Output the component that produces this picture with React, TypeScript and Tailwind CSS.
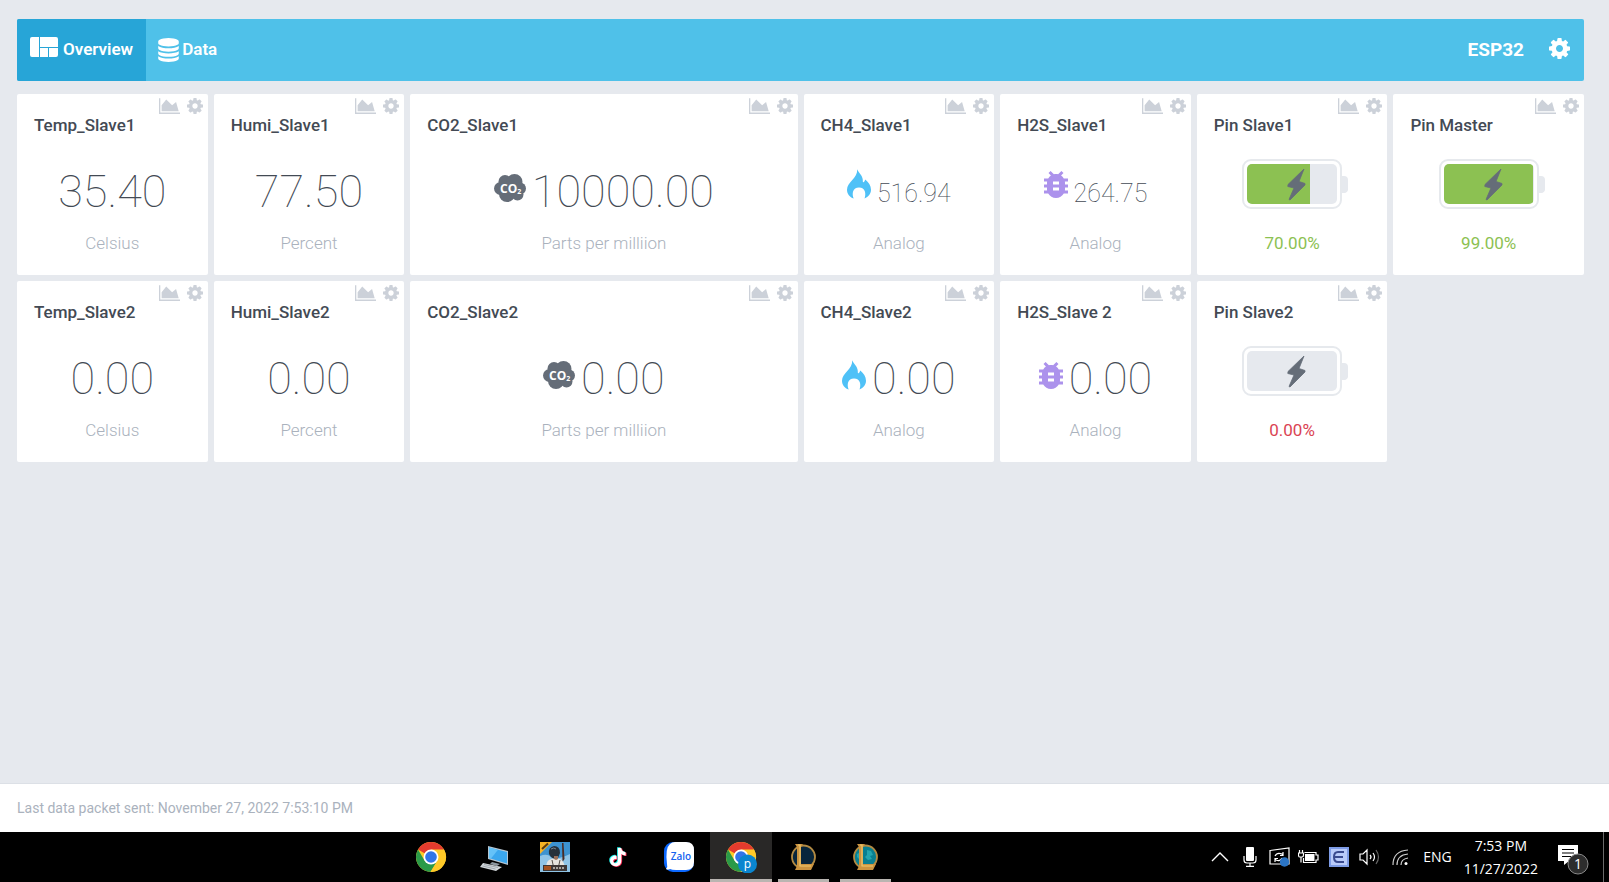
import type { ReactNode } from "react";
import { MdBugReport } from "react-icons/md";

function CogIcon({ className }: { className: string }) {
  return (
    <svg viewBox="128 128 1536 1536" className={className} fill="currentColor" aria-hidden="true">
      <path d="M1152 896q0-106-75-181t-181-75-181 75-75 181 75 181 181 75 181-75 75-181zm512-109v222q0 12-8 23t-20 13l-185 28q-19 54-39 91 35 50 107 138 10 12 10 25t-9 23q-27 37-99 108t-94 71q-12 0-26-9l-138-108q-44 23-91 38-16 136-29 186-7 28-36 28h-222q-14 0-24.500-8.500t-11.500-21.500l-28-184q-49-16-90-37l-141 107q-10 9-25 9-14 0-25-11-126-114-165-168-7-10-7-23 0-12 8-23 15-21 51-66.500t54-70.500q-27-50-41-99l-183-27q-13-2-21-12.500t-8-23.500v-222q0-12 8-23t19-13l186-28q14-46 39-92-40-57-107-138-10-12-10-24 0-10 9-23 26-36 98.500-107.500t94.500-71.500q13 0 26 10l138 107q44-23 91-38 16-136 29-186 7-28 36-28h222q14 0 24.500 8.500t11.500 21.500l28 184q49 16 90 37l142-107q9-9 24-9 13 0 25 10 129 119 165 170 7 8 7 22 0 12-8 23-15 21-51 66.500t-54 70.500q26 50 41 98l183 28q13 2 21 12.500t8 23.500z" />
    </svg>
  );
}

function AreaChartIcon() {
  return (
    <svg viewBox="0 128 2048 1536" className="h-4 w-[21px]" fill="currentColor" aria-hidden="true">
      <path d="M2048 1536v128h-2048v-1536h128v1408h1920zm-384-1024l256 896h-1664v-576l448-576 576 576z" />
    </svg>
  );
}

function DatabaseIcon() {
  return (
    <svg viewBox="128 0 1536 1792" className="h-6 w-[21px]" fill="currentColor" aria-hidden="true">
      <path d="M896 768q237 0 443-43t325-127v170q0 69-103 128t-280 93.5-385 34.5-385-34.5-280-93.5-103-128v-170q119 84 325 127t443 43zm0 768q237 0 443-43t325-127v170q0 69-103 128t-280 93.5-385 34.5-385-34.5-280-93.5-103-128v-170q119 84 325 127t443 43zm0-384q237 0 443-43t325-127v170q0 69-103 128t-280 93.5-385 34.5-385-34.5-280-93.5-103-128v-170q119 84 325 127t443 43zm0-1152q208 0 385 34.5t280 93.5 103 128v128q0 69-103 128t-280 93.5-385 34.5-385-34.5-280-93.5-103-128v-128q0-69 103-128t280-93.5 385-34.5z" />
    </svg>
  );
}

function OverviewIcon() {
  return (
    <svg viewBox="0 0 28 20" className="h-5 w-7" fill="currentColor" aria-hidden="true">
      <path d="M2 0h7v20H2a2 2 0 0 1-2-2V2a2 2 0 0 1 2-2zM10 0h16a2 2 0 0 1 2 2v8H10zM10 11h8v9h-8zM19 11h9v7a2 2 0 0 1-2 2h-7z" />
    </svg>
  );
}

function Co2Icon() {
  return (
    <svg viewBox="0 0 32 28" className="mb-2 h-7 w-8" aria-hidden="true">
      <g fill="#656d78">
        <circle cx="11" cy="7.500" r="6.500" />
        <circle cx="20.500" cy="8" r="8" />
        <circle cx="6.500" cy="14.500" r="6.500" />
        <circle cx="26" cy="14.500" r="6" />
        <circle cx="13" cy="20" r="8" />
        <circle cx="23.500" cy="20.500" r="6" />
      </g>
      <text x="6" y="19" fill="#fff" fontSize="12" fontWeight="700" fontFamily="Open Sans, sans-serif">
        CO<tspan fontSize="7" dy="1">2</tspan>
      </text>
    </svg>
  );
}

function FlameIcon() {
  return (
    <svg viewBox="0 0 24 30" className="mb-2 h-[30px] w-6" fill="#4fc1f7" aria-hidden="true">
      <path d="M10.200.2c1.200 3.200 5.600 6.300 5.600 10.800 0 1.200-.1 2 .6 2.300.9.100 1.200-1.300 1.900-2.700 3.200 2.600 5.700 6.300 5.700 10.200 0 4-2.500 7-6.500 8.700 1.800-4.400.9-11-5.500-11s-7.300 6.600-5.300 11C2.700 28 0 25 0 20.700 0 12.500 10.700 9.800 10.200.2z" />
    </svg>
  );
}

function BugIcon() {
  return <MdBugReport viewBox="4 3 16 18" className="mb-2 h-[27px] w-6 text-[#ac92ec]" aria-hidden="true" />;
}

function Battery({ level }: { level: number }) {
  return (
    <svg viewBox="0 0 112 50" className="h-[50px] w-28" aria-hidden="true">
      <clipPath id={`level-${level}`}>
        <rect x="11" y="5" width={(90 * level) / 100} height="40" />
      </clipPath>
      <rect x="7" y="1" width="98" height="48" rx="8" fill="#fff" stroke="#e6e9ed" strokeWidth="2" />
      <path d="M106 17h2a4 4 0 0 1 4 4v8a4 4 0 0 1-4 5h-2z" fill="#e6e9ee" />
      <rect x="11" y="5" width="90" height="40" rx="5" fill="#e6e9ee" />
      <rect x="11" y="5" width="90" height="40" rx="5" fill="#8cc152" clipPath={`url(#level-${level})`} />
      <path d="M68 10 52 25.500 51.800 27.500 58 29 53 40.500 54 41 69 26 69 24.500 63 22.500z" fill="#656d78" stroke="#656d78" strokeLinejoin="round" strokeWidth=".8" />
    </svg>
  );
}

type Widget = {
  title: string;
  value?: string;
  unit: string;
  icon?: ReactNode;
  small?: boolean;
  wide?: boolean;
  level?: number;
  alert?: boolean;
};

const widgets: Widget[] = [
  { title: "Temp_Slave1", value: "35.40", unit: "Celsius" },
  { title: "Humi_Slave1", value: "77.50", unit: "Percent" },
  { title: "CO2_Slave1", value: "10000.00", unit: "Parts per milliion", icon: <Co2Icon />, wide: true },
  { title: "CH4_Slave1", value: "516.94", unit: "Analog", icon: <FlameIcon />, small: true },
  { title: "H2S_Slave1", value: "264.75", unit: "Analog", icon: <BugIcon />, small: true },
  { title: "Pin Slave1", unit: "70.00%", level: 70 },
  { title: "Pin Master", unit: "99.00%", level: 99 },
  { title: "Temp_Slave2", value: "0.00", unit: "Celsius" },
  { title: "Humi_Slave2", value: "0.00", unit: "Percent" },
  { title: "CO2_Slave2", value: "0.00", unit: "Parts per milliion", icon: <Co2Icon />, wide: true },
  { title: "CH4_Slave2", value: "0.00", unit: "Analog", icon: <FlameIcon /> },
  { title: "H2S_Slave 2", value: "0.00", unit: "Analog", icon: <BugIcon /> },
  { title: "Pin Slave2", unit: "0.00%", level: 0, alert: true },
];

function Card({ widget }: { widget: Widget }) {
  const { title, value, unit, icon, small, wide, level, alert } = widget;
  const unitColor = level === undefined ? "text-[#aab2bd]" : alert ? "text-[#da4453]" : "text-[#8cc152]";
  return (
    <section className={`flex flex-col rounded-xs bg-white pb-5 ${wide ? "col-span-2" : ""}`}>
      <div className="flex h-5 items-end justify-end gap-[7px] pr-[5px] text-[#ccd1d9]">
        <button type="button" aria-label={`${title} chart`}>
          <AreaChartIcon />
        </button>
        <button type="button" aria-label={`${title} settings`}>
          <CogIcon className="size-4" />
        </button>
      </div>
      <h2 className="px-[17px] text-[17px] leading-[22px] font-medium text-[#434a54]">{title}</h2>
      <div className="flex h-[76px] items-center justify-center pt-7">
        {level !== undefined ? (
          <div className="pb-2">
            <Battery level={level} />
          </div>
        ) : (
          <div className="flex items-center gap-1.5 pt-2">
            {icon && <span className={small ? "pb-2" : ""}>{icon}</span>}
            <span className={`font-thin text-[#434a54] ${small ? "pt-1 text-[25px] leading-8" : "text-[45px] leading-10"}`}>
              {value}
            </span>
          </div>
        )}
      </div>
      <p className={`pt-[19px] text-center text-[17px] leading-6 ${level === undefined ? "font-light" : "font-normal"} ${unitColor}`}>{unit}</p>
    </section>
  );
}

function ChromeIcon({ badge }: { badge?: boolean }) {
  return (
    <svg viewBox="0 0 32 32" className="size-8" aria-hidden="true">
      <circle cx="16" cy="16" r="15" fill="#ffc928" />
      <path d="M16 16 3 8.500A15 15 0 0 1 29 8.500z" fill="#e33b2e" />
      <path d="M3 8.500A15 15 0 0 0 15.500 31L22.500 19.500 9.500 19.500z" fill="#2a9a48" />
      <path d="M16 8.500h13A15 15 0 0 1 15.500 31L22.500 19.500z" fill="#ffc928" />
      <circle cx="16" cy="16" r="7.500" fill="#fff" />
      <circle cx="16" cy="16" r="5.800" fill="#3175e8" />
      {badge && (
        <>
          <circle cx="22.500" cy="23" r="9.500" fill="#0a85cf" />
          <text x="22.500" y="26.500" textAnchor="middle" fill="#fff" fontSize="12" fontFamily="Open Sans, sans-serif">
            p
          </text>
        </>
      )}
    </svg>
  );
}

function ComputerIcon() {
  return (
    <svg viewBox="0 0 30 30" className="size-[30px]" aria-hidden="true">
      <path d="M10 4l20 5v14l-20-6z" fill="#b6c6d2" />
      <path d="M11 5.500l18 4.500v11.500L11 16z" fill="#3ba7ee" />
      <path d="M11 5.500l9 2.200L13 16.500l-2-.6z" fill="#65c2f8" />
      <path d="M14 20l8 2-3 2-7-2z" fill="#8c979f" />
      <path d="M5 21l19 4-6 4-16-4z" fill="#d2d7da" />
      <path d="M6 22.500l14 3M4.500 24l13 3" stroke="#8c979f" strokeWidth=".7" />
    </svg>
  );
}

function PubgIcon() {
  return (
    <svg viewBox="0 0 30 30" className="size-[30px]" aria-hidden="true">
      <path d="M0 0h30v30H0z" fill="#3d93d0" />
      <path d="M0 14q7-3 11 1t19-3v18H0z" fill="#8fc4e6" />
      <path d="M0 0h12L0 12z" fill="#f5b324" />
      <path d="M2 7 8 1.500" stroke="#5a3a10" strokeWidth="2" />
      <path d="M22 1h1.500l1 16-2 3z" fill="#4a2c24" />
      <path d="M6 27q0-7 3-9l5-2 6 1q5 3 5 10z" fill="#e6e4df" />
      <path d="M12 18l2 9M20 18l-2 9" stroke="#55504b" />
      <path d="M9 12q-1-7 5-8 6 0 6 7l-2 5q-4 2-7-1z" fill="#27313a" />
      <path d="M11 7q3-2 5 0" stroke="#7a8790" fill="none" />
      <path d="M14 14h4v3l-2 1-2-1z" fill="#99705a" />
      <path d="M3 23h24v6H3z" fill="#3d3736" />
      <path d="M4 24h7v4H4z" fill="#a5521f" />
      <path d="M13 26h12" stroke="#a9a5a0" strokeWidth="2" strokeDasharray="2 1" />
    </svg>
  );
}

function TiktokIcon() {
  const note = "M10 1h3.500c.3 2.600 1.800 4.200 4.500 4.400v3.400c-1.700.1-3.200-.5-4.500-1.400v6.900c0 6.800-8.800 7.500-11 3-2.300-4.800 1.400-9 6-8.300v3.600c-3.200-.5-4.300 2-3.100 3.500 1.400 1.700 4.600 1 4.600-2.200z";
  return (
    <svg viewBox="-1 0 20 22" className="h-[21px] w-5" aria-hidden="true">
      <path d={note} fill="#25f4ee" transform="translate(-.9 -.7)" />
      <path d={note} fill="#fe2c55" transform="translate(.9 .7)" />
      <path d={note} fill="#fff" />
    </svg>
  );
}

function ZaloIcon() {
  return (
    <svg viewBox="0 0 30 30" className="size-[30px]" aria-hidden="true">
      <rect width="30" height="30" rx="9" fill="#0b68ff" />
      <path d="M11 0h11q8 0 8 8v12q0 8-8 8H12q-4 0-6-1-2 1-4 0 2-2 1-5Q1 6 6 2 8 0 11 0z" fill="#fff" />
      <text x="17" y="18" textAnchor="middle" fill="#1463ef" fontSize="10" fontWeight="600" fontFamily="Open Sans, sans-serif">
        Zalo
      </text>
    </svg>
  );
}

function LeagueIcon({ bright }: { bright?: boolean }) {
  return (
    <svg viewBox="0 0 26 28" className="h-7 w-[26px]" aria-hidden="true">
      <circle cx="13.500" cy="14" r="11.500" fill={bright ? "#087f91" : "#08263c"} stroke="#b28a43" strokeWidth="1.800" />
      {bright && <path d="M15 7l4 1 2 4-3 1 2 3-4 1-3-3 2-2zM5 11l2-1v6l-2-2z" fill="#23a5b0" />}
      <path d="M5 1h8l-2 3v17h13l-3 6H5l2-4V4z" fill="#cb9440" />
      <path d="M8 2h2v21h11" fill="none" stroke="#efc76c" strokeWidth="1.200" />
    </svg>
  );
}

const apps: { name: string; icon: ReactNode; state?: "active" | "open" }[] = [
  { name: "Chrome", icon: <ChromeIcon /> },
  { name: "Computer", icon: <ComputerIcon /> },
  { name: "PUBG", icon: <PubgIcon /> },
  { name: "TikTok", icon: <TiktokIcon /> },
  { name: "Zalo chat", icon: <ZaloIcon /> },
  { name: "Chrome profile", icon: <ChromeIcon badge />, state: "active" },
  { name: "League client", icon: <LeagueIcon />, state: "open" },
  { name: "League game", icon: <LeagueIcon bright />, state: "open" },
];

function Tray() {
  return (
    <div className="ml-auto flex items-center text-white">
      <button type="button" aria-label="Hidden icons" className="mr-3.5">
        <svg viewBox="0 0 18 10" className="h-2.5 w-[18px]" fill="none" stroke="currentColor" strokeWidth="1.400">
          <path d="M1 9l8-8 8 8" />
        </svg>
      </button>
      <svg viewBox="0 0 14 20" className="mr-3 h-5 w-3.5" aria-hidden="true">
        <rect x="3" width="8" height="14" rx="1" fill="#fff" />
        <path d="M1 9v4q0 3 3 3h6q3 0 3-3V9M7 16v3M3 19.400h8" fill="none" stroke="#fff" strokeWidth="1.200" />
      </svg>
      <svg viewBox="0 0 21 20" className="mr-2 h-5 w-[21px]" fill="none" stroke="#fff" aria-hidden="true">
        <path d="M1 3.500 20 1v16L1 17z" strokeWidth="1.200" />
        <path d="M6 9q2-4 7-2l1 1M14 5v3.500h-3M13 11q-2 4-6 2l-1-1M6 15v-3.500h3" strokeWidth="1.200" />
        <circle cx="15.500" cy="15" r="4.700" fill="#2b74c4" stroke="none" />
      </svg>
      <svg viewBox="0 0 21 16" className="mr-2.5 h-4 w-[21px]" fill="none" stroke="#fff" aria-hidden="true">
        <path d="M1.500 1v3M4.500 1v3M.5 4h5v2q0 2-1.500 2H2Q.5 8 .5 6zM3 8v5.500M6.500 3.500H18V6h2v5h-2v2.500H5.500V9" strokeWidth="1.200" />
        <path d="M7 5h9.500v7H7z" fill="#fff" stroke="none" />
      </svg>
      <svg viewBox="0 0 20 20" className="mr-2.5 size-5" aria-hidden="true">
        <path d="M0 0h20v20H0z" fill="#7e9ce6" />
        <path d="M2 2h16v16H2z" fill="#b9cbfa" />
        <path d="M15 5H9q-4 0-4 5t4 5h6M5 10h9" fill="none" stroke="#394a8f" strokeWidth="2" />
      </svg>
      <svg viewBox="0 0 21 18" className="mr-3 h-[18px] w-[21px]" fill="none" stroke="#fff" strokeWidth="1.200" aria-hidden="true">
        <path d="M1 6h3l4-4v14l-4-4H1zM11 7q2 2 0 4M14 5q3 4 0 8" />
        <path d="M17 2q5 7 0 14" stroke="#666" />
      </svg>
      <svg viewBox="0 0 17 17" className="mr-3.5 size-[17px]" fill="none" stroke="#ccc" strokeWidth="1.200" aria-hidden="true">
        <path d="M1 16Q1 2 16 1M5 16Q5 6 16 5M9 16q0-6 7-7" />
        <circle cx="14" cy="14.500" r="1.500" fill="#fff" stroke="none" />
      </svg>
      <span className="mr-3 text-sm">ENG</span>
      <div className="mr-5 text-center text-sm leading-[23px]">
        <div>7:53 PM</div>
        <div>11/27/2022</div>
      </div>
      <button type="button" aria-label="Notifications" className="mr-3.5 pt-1">
        <svg viewBox="0 0 31 32" className="h-8 w-[31px]">
          <path d="M0 2h20v16h-9l-5 4v-4H0z" fill="#fff" />
          <path d="M4 6.500h12M4 10h12M4 13.500h9" stroke="#000" strokeWidth="1.200" />
          <circle cx="20" cy="21" r="10" fill="#2d2d2d" stroke="#8a8a8a" />
          <text x="20" y="26" textAnchor="middle" fill="#fff" fontSize="14">
            1
          </text>
        </svg>
      </button>
      <div className="mr-[5px] h-[50px] w-px bg-[#6a6a6a]" />
    </div>
  );
}

export default function App() {
  return (
    <div className="flex min-h-screen flex-col bg-[#e6e9ee] font-['Roboto',sans-serif]">
      <main className="flex-1 pt-[19px] pr-[25px] pb-6 pl-[17px]">
        <nav className="flex h-[62px] items-stretch overflow-hidden rounded-xs bg-[#4fc1e9] text-white">
          <a href="#overview" className="flex items-center gap-[5px] bg-[#27a5d7] px-[13px] text-[17px] font-semibold">
            <span className="pb-1.5">
              <OverviewIcon />
            </span>
            <span>Overview</span>
          </a>
          <a href="#data" className="flex items-center gap-[3px] px-3 text-[17px] font-semibold">
            <span>
              <DatabaseIcon />
            </span>
            <span>Data</span>
          </a>
          <div className="ml-auto flex items-center gap-[25px] pr-3.5">
            <span className="text-[19px] font-bold">ESP32</span>
            <button type="button" aria-label="Dashboard settings" className="pb-1">
              <CogIcon className="size-[21px]" />
            </button>
          </div>
        </nav>
        <div className="mt-[13px] grid grid-cols-8 gap-1.5">
          {widgets.map((widget) => (
            <Card key={widget.title} widget={widget} />
          ))}
        </div>
      </main>
      <footer className="border-t border-[#dce0e6] bg-white px-[17px] py-3 text-sm leading-6 text-[#aab2bd]">
        Last data packet sent: November 27, 2022 7:53:10 PM
      </footer>
      <div className="flex h-[50px] bg-black pl-[400px] font-['Open_Sans',sans-serif]">
        {apps.map(({ name, icon, state }) => (
          <button
            key={name}
            type="button"
            aria-label={name}
            className={`flex w-[62px] flex-col items-center ${state === "active" ? "bg-[#292827]" : ""}`}
          >
            <span className="flex flex-1 items-center pt-[3px]">{icon}</span>
            <span className={`h-[3px] ${state === "active" ? "w-full bg-[#b9b5b1]" : state === "open" ? "w-[51px] bg-[#b9b5b1]" : "w-full"}`} />
          </button>
        ))}
        <Tray />
      </div>
    </div>
  );
}
